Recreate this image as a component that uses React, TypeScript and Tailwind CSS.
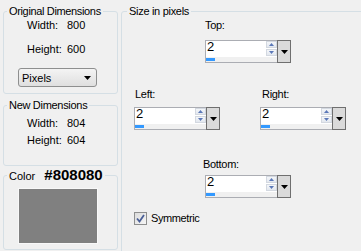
import React from "react";

function Arrow({ color = "#000" }: { color?: string }) {
  return (
    <svg width="7" height="4" viewBox="0 0 7 4">
      <path d="M0 0H7L3.5 4Z" fill={color} />
    </svg>
  );
}

function SpinBox() {
  return (
    <div className="flex h-[23px] w-[86px]">
      <div className="flex w-[72px] flex-col border border-r-0 border-[#abadb3] bg-white">
        <div className="flex h-[16px]">
          <div className="flex-1 bg-white pl-[1px] text-[13px] leading-[12px]">2</div>
          <div className="flex w-[11px] flex-col gap-[1px] bg-white">
            <div className="flex h-[7px] items-center justify-center border border-[#d3d8e0] bg-gradient-to-b from-[#f4f6f9] to-[#e3e8ef]">
              <svg width="5" height="3" viewBox="0 0 5 3">
                <path d="M0 3H5L2.5 0Z" fill="#5b78b8" />
              </svg>
            </div>
            <div className="flex h-[7px] items-center justify-center border border-[#d3d8e0] bg-gradient-to-b from-[#f4f6f9] to-[#e3e8ef]">
              <svg width="5" height="3" viewBox="0 0 5 3">
                <path d="M0 0H5L2.5 3Z" fill="#5b78b8" />
              </svg>
            </div>
          </div>
        </div>
        <div className="flex-1 bg-[#f0f0f0] pt-[1px]">
          <div className="h-[3px] w-[9px] bg-[#3399ff]" />
        </div>
      </div>
      <div className="flex w-[14px] items-center justify-center border border-[#6f6f6f] bg-[#dadada]">
        <Arrow />
      </div>
    </div>
  );
}

export default function App() {
  return (
    <div className="flex h-[251px] w-[361px] overflow-hidden bg-[#f0f0f0] font-['Liberation_Sans',Arial,sans-serif] text-[11px] leading-[14px] text-black">
      {/* Left column */}
      <div className="flex w-[119px] shrink-0 flex-col pl-[3px]">
        <fieldset className="mt-[4px] h-[90px] w-[115px] rounded-[3px] border border-[#d5dfe5]">
          <legend className="ml-[3px] px-[2px] leading-[14px] tracking-[-0.35px]">Original Dimensions</legend>
          <div className="flex pl-[23px]">
            <span className="w-[40px]">Width:</span>
            <span>800</span>
          </div>
          <div className="mt-[10px] flex pl-[23px]">
            <span className="w-[40px]">Height:</span>
            <span>600</span>
          </div>
          <div className="ml-[14px] mt-[12px] flex h-[19px] w-[79px] items-center justify-between rounded-[3px] border border-[#8e8f8f] bg-gradient-to-b from-[#f4f4f4] to-[#dfdfdf] pl-[3px] pr-[5px]">
            <span>Pixels</span>
            <Arrow />
          </div>
        </fieldset>

        <fieldset className="mt-[4px] h-[68px] w-[115px] rounded-[3px] border border-[#d5dfe5]">
          <legend className="ml-[3px] px-[2px] leading-[14px] tracking-[-0.3px]">New Dimensions</legend>
          <div className="mt-[4px] flex pl-[23px]">
            <span className="w-[40px]">Width:</span>
            <span>804</span>
          </div>
          <div className="mt-[3px] flex pl-[23px]">
            <span className="w-[40px]">Height:</span>
            <span>604</span>
          </div>
        </fieldset>

        <fieldset className="h-[84px] w-[115px] rounded-[3px] border border-[#d5dfe5]">
          <legend className="ml-[3px] px-[2px] leading-[18px]">
            <span>Color</span>
            <span className="ml-[9px] text-[15px] font-bold">#808080</span>
          </legend>
          <div className="ml-[14px] mt-[3px] h-[56px] w-[80px] border border-[#f8f8f8] bg-[#808080]" />
        </fieldset>
      </div>

      {/* Right group */}
      <fieldset className="ml-[2px] mt-[4px] h-[270px] w-[250px] shrink-0 rounded-[3px] border border-[#d5dfe5]">
        <legend className="ml-[5px] px-[2px] leading-[14px] tracking-[-0.3px]">Size in pixels</legend>

        <div className="flex flex-col pl-[83px]">
          <span className="tracking-[-0.3px]">Top:</span>
          <div className="mt-[8px]">
            <SpinBox />
          </div>
        </div>

        <div className="mt-[24px] flex pl-[12px]">
          <div className="flex flex-col">
            <span className="pl-[1px] tracking-[-0.3px]">Left:</span>
            <div className="mt-[6px]">
              <SpinBox />
            </div>
          </div>
          <div className="ml-[40px] flex flex-col">
            <span className="pl-[2px] tracking-[-0.3px]">Right:</span>
            <div className="mt-[6px]">
              <SpinBox />
            </div>
          </div>
        </div>

        <div className="mt-[27px] flex flex-col pl-[83px]">
          <span className="-ml-[2px] tracking-[-0.3px]">Bottom:</span>
          <div className="mt-[4px]">
            <SpinBox />
          </div>
        </div>

        <div className="mt-[13px] flex items-center gap-[4px] pl-[12px]">
          <div className="flex h-[13px] w-[13px] items-center justify-center border border-[#8e8f8f] bg-gradient-to-br from-[#dcdcdc] to-[#f6f6f6]">
            <svg width="9" height="9" viewBox="0 0 9 9">
              <path d="M1 4.5L3.5 7.5L8 1" fill="none" stroke="#4a5f97" strokeWidth="1.8" />
            </svg>
          </div>
          <span className="tracking-[-0.4px]">Symmetric</span>
        </div>
      </fieldset>
    </div>
  );
}
